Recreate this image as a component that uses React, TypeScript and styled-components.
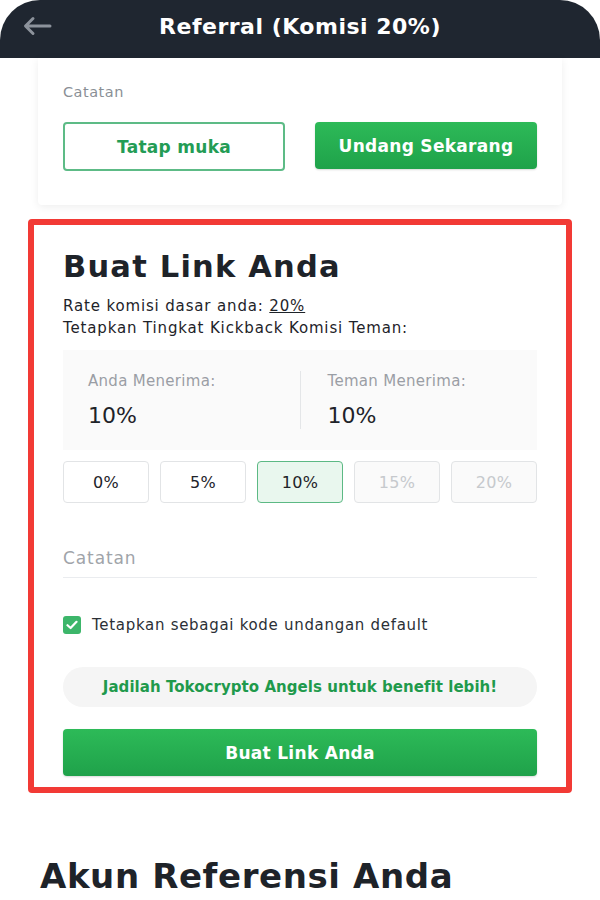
import React, { useState } from "react";
import styled, { createGlobalStyle } from "styled-components";

const GlobalStyle = createGlobalStyle`
    html, body {
        margin: 0;
        padding: 0;
        background: #ffffff;
    }
    body {
        font-family: "DejaVu Sans", "Noto Sans", Arial, sans-serif;
        color: #1e2329;
    }
    * {
        box-sizing: border-box;
    }
`;

const Screen = styled.div`
    width: 600px;
    height: 900px;
    overflow: hidden;
    background: #ffffff;
    border-radius: 40px 40px 0 0;
    display: flex;
    flex-direction: column;
`;

const Header = styled.div`
    height: 58px;
    flex-shrink: 0;
    background: #1f2630;
    display: grid;
    grid-template-columns: 70px 1fr 70px;
    align-items: center;
`;

const BackButton = styled.div`
    padding-left: 22px;
    display: flex;
    align-items: center;
    height: 100%;
    padding-bottom: 6px;
`;

const Title = styled.h1`
    margin: 0;
    text-align: center;
    color: #ffffff;
    font-size: 22px;
    font-weight: 700;
    letter-spacing: 0.5px;
    padding-bottom: 6px;
`;

const Body = styled.div`
    display: flex;
    flex-direction: column;
`;

const TopCard = styled.div`
    margin: 0 38px;
    padding: 24px 25px 34px;
    background: #ffffff;
    border-radius: 0 0 4px 4px;
    box-shadow: 0 2px 8px rgba(0, 0, 0, 0.07);
    display: flex;
    flex-direction: column;
    gap: 20px;
`;

const MutedLabel = styled.div`
    font-size: 14.5px;
    line-height: 20px;
    letter-spacing: 0.5px;
    color: #8a8f96;
`;

const ButtonRow = styled.div`
    display: grid;
    grid-template-columns: 1fr 1fr;
    gap: 30px;
`;

const OutlineButton = styled.button`
    height: 49px;
    border: 2px solid #5dbb86;
    border-radius: 4px;
    background: #ffffff;
    color: #239c55;
    font-family: inherit;
    font-size: 17px;
    font-weight: 700;
    letter-spacing: 0.3px;
`;

const SolidButton = styled.button`
    height: 47px;
    border: none;
    border-radius: 4px;
    background: linear-gradient(180deg, #2dba58 0%, #1fa24a 100%);
    color: #ffffff;
    font-family: inherit;
    font-size: 17px;
    font-weight: 700;
    letter-spacing: 0.3px;
    box-shadow: 0 1px 2px rgba(0, 0, 0, 0.15);
`;

const Highlight = styled.div`
    margin: 14px 28px 0;
    border: 6px solid #f23a35;
    border-radius: 4px;
`;

const LinkCard = styled.div`
    padding: 23px 29px 11px;
    background: #ffffff;
    display: flex;
    flex-direction: column;
`;

const CardTitle = styled.h2`
    margin: 0;
    font-size: 30.5px;
    line-height: 38px;
    font-weight: 700;
    letter-spacing: 1.2px;
    color: #1e2329;
`;

const InfoText = styled.p<{ $first?: boolean }>`
    margin: ${(p) => (p.$first ? "9px 0 0" : "0")};
    font-size: 15px;
    line-height: 22px;
    letter-spacing: 0.85px;
    color: #1e2329;
`;

const Underlined = styled.span`
    text-decoration: underline;
`;

const RateBox = styled.div`
    margin-top: 11px;
    height: 100px;
    background: #fafafa;
    display: grid;
    grid-template-columns: 1fr 1px 1fr;
    align-items: center;
    padding: 0 25px;
`;

const RateCol = styled.div<{ $right?: boolean }>`
    display: flex;
    flex-direction: column;
    gap: 12px;
    padding-left: ${(p) => (p.$right ? "27px" : "0")};
`;

const RateLabel = styled.div`
    font-size: 15px;
    line-height: 20px;
    letter-spacing: 0.3px;
    color: #9a9ea5;
`;

const RateValue = styled.div`
    font-size: 22px;
    line-height: 26px;
    color: #1e2329;
`;

const VDivider = styled.div`
    height: 58px;
    width: 1px;
    background: #e4e6e8;
`;

const PercentRow = styled.div`
    margin-top: 11px;
    display: grid;
    grid-template-columns: repeat(5, 1fr);
    gap: 11px;
`;

const PercentButton = styled.button<{ $active?: boolean; $disabled?: boolean }>`
    height: 42px;
    border-radius: 4px;
    font-family: inherit;
    font-size: 16px;
    letter-spacing: 0.3px;
    border: 1px solid ${(p) => (p.$active ? "#5cb984" : "#e2e4e6")};
    background: ${(p) => (p.$active ? "#e9f7ee" : p.$disabled ? "#fafafa" : "#ffffff")};
    color: ${(p) => (p.$disabled ? "#c6c9cd" : "#1e2329")};
`;

const NoteField = styled.div`
    margin-top: 34px;
    padding: 10px 0 8px;
    border-bottom: 1px solid #eaecef;
    font-size: 17px;
    line-height: 22px;
    letter-spacing: 0.9px;
    color: #a0a4a9;
`;

const CheckRow = styled.label`
    margin-top: 37px;
    display: flex;
    align-items: center;
    gap: 11px;
    font-size: 15px;
    line-height: 20px;
    letter-spacing: 0.7px;
    color: #2b3036;
`;

const CheckBox = styled.span`
    width: 18px;
    height: 18px;
    border-radius: 3px;
    background: #3cb66a;
    display: flex;
    align-items: center;
    justify-content: center;
`;

const Banner = styled.div`
    margin-top: 32px;
    height: 40px;
    border-radius: 20px;
    background: #f5f5f5;
    display: flex;
    align-items: center;
    justify-content: center;
    font-size: 15px;
    font-weight: 700;
    letter-spacing: 0.05px;
    color: #1f9a4c;
`;

const CreateButton = styled(SolidButton)`
    margin-top: 22px;
`;

const SectionTitle = styled.h2`
    margin: 61px 40px 0;
    font-size: 34px;
    line-height: 44px;
    font-weight: 700;
    letter-spacing: 0.6px;
    color: #1e2329;
`;

const percents = [
    { v: "0%", disabled: false },
    { v: "5%", disabled: false },
    { v: "10%", disabled: false },
    { v: "15%", disabled: true },
    { v: "20%", disabled: true },
];

export default function App() {
    const [selected, setSelected] = useState("10%");
    const [isDefault, setIsDefault] = useState(true);

    return (
        <>
            <GlobalStyle/>
            <Screen>
                <Header>
                    <BackButton>
                        <svg width="30" height="20" viewBox="0 0 30 20" fill="none">
                            <path d="M28 10H4M11 2.5L3.5 10L11 17.5" stroke="#8c929b" strokeWidth="3"
                                  strokeLinecap="round" strokeLinejoin="round"/>
                        </svg>
                    </BackButton>
                    <Title>Referral (Komisi 20%)</Title>
                    <div/>
                </Header>
                <Body>
                    <TopCard>
                        <MutedLabel>Catatan</MutedLabel>
                        <ButtonRow>
                            <OutlineButton>Tatap muka</OutlineButton>
                            <SolidButton>Undang Sekarang</SolidButton>
                        </ButtonRow>
                    </TopCard>

                    <Highlight>
                        <LinkCard>
                            <CardTitle>Buat Link Anda</CardTitle>
                            <InfoText $first>
                                Rate komisi dasar anda: <Underlined>20%</Underlined>
                            </InfoText>
                            <InfoText>Tetapkan Tingkat Kickback Komisi Teman:</InfoText>
                            <RateBox>
                                <RateCol>
                                    <RateLabel>Anda Menerima:</RateLabel>
                                    <RateValue>{selected}</RateValue>
                                </RateCol>
                                <VDivider/>
                                <RateCol $right>
                                    <RateLabel>Teman Menerima:</RateLabel>
                                    <RateValue>{20 - parseInt(selected)}%</RateValue>
                                </RateCol>
                            </RateBox>
                            <PercentRow>
                                {percents.map((p) => (
                                    <PercentButton
                                        key={p.v}
                                        $active={selected === p.v}
                                        $disabled={p.disabled}
                                        onClick={() => !p.disabled && setSelected(p.v)}
                                    >
                                        {p.v}
                                    </PercentButton>
                                ))}
                            </PercentRow>
                            <NoteField>Catatan</NoteField>
                            <CheckRow onClick={() => setIsDefault(!isDefault)}>
                                <CheckBox>
                                    {isDefault && (
                                        <svg width="12" height="10" viewBox="0 0 12 10" fill="none">
                                            <path d="M1.5 5.2L4.6 8L10.5 1.8" stroke="#ffffff" strokeWidth="2.2"
                                                  strokeLinecap="round" strokeLinejoin="round"/>
                                        </svg>
                                    )}
                                </CheckBox>
                                Tetapkan sebagai kode undangan default
                            </CheckRow>
                            <Banner>Jadilah Tokocrypto Angels untuk benefit lebih!</Banner>
                            <CreateButton>Buat Link Anda</CreateButton>
                        </LinkCard>
                    </Highlight>

                    <SectionTitle>Akun Referensi Anda</SectionTitle>
                </Body>
            </Screen>
        </>
    );
}
